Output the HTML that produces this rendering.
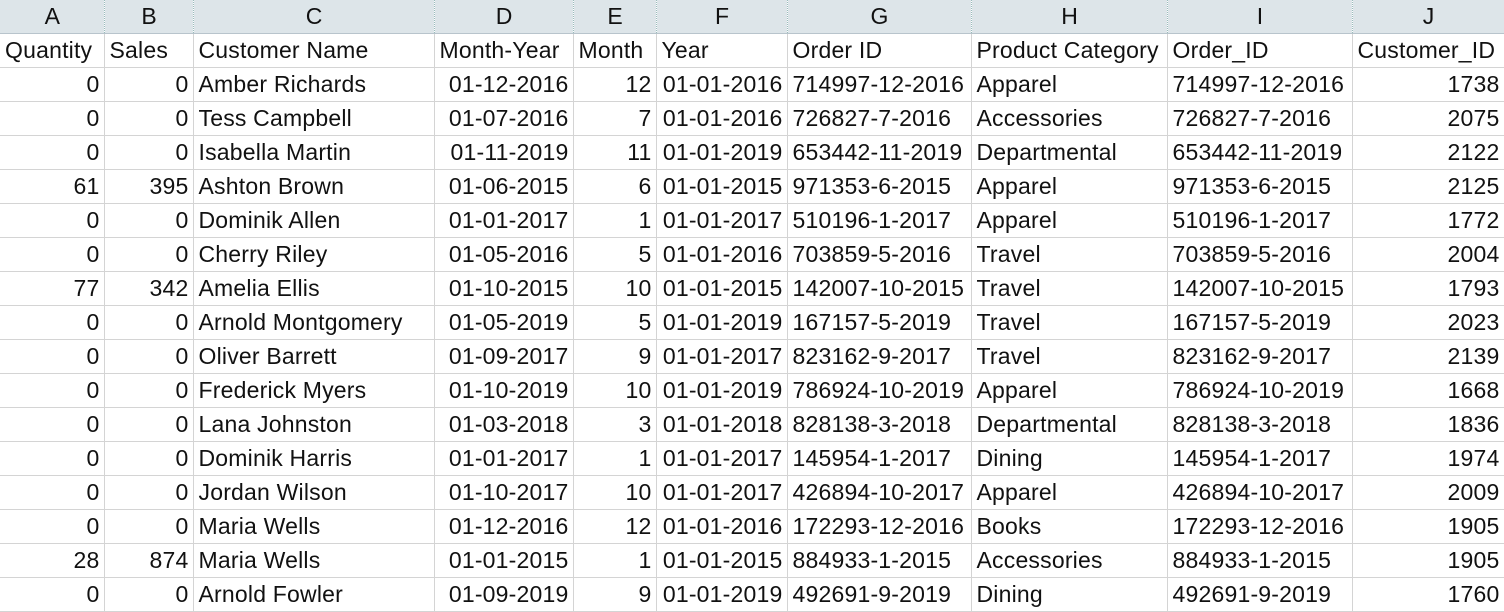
<!DOCTYPE html>
<html><head><meta charset="utf-8"><style>
body{margin:0;width:1504px;height:612px;overflow:hidden;background:#fff;font-family:"Liberation Sans",sans-serif;}
table{border-collapse:collapse;table-layout:fixed;width:1504px;}
td{height:34px;padding:0 4px 0 5px;border-right:1px solid #d4d4d4;border-bottom:1px solid #d4d4d4;font-size:23px;color:#111;white-space:nowrap;overflow:hidden;box-sizing:border-box;letter-spacing:0.2px;line-height:33px}
tr.h td{background:#dde5e9;text-align:center;height:33px;line-height:32px;border-right:1px dotted #9bb;border-bottom:1px solid #b8c4cc;letter-spacing:0}
td.r{text-align:right}
</style></head><body>
<table>
<colgroup><col style="width:104px"><col style="width:89px"><col style="width:241px"><col style="width:139px"><col style="width:83px"><col style="width:131px"><col style="width:184px"><col style="width:196px"><col style="width:185px"><col style="width:152px"></colgroup>
<tr class="h"><td>A</td><td>B</td><td>C</td><td>D</td><td>E</td><td>F</td><td>G</td><td>H</td><td>I</td><td>J</td></tr>
<tr><td>Quantity</td><td>Sales</td><td>Customer Name</td><td>Month-Year</td><td>Month</td><td>Year</td><td>Order ID</td><td>Product Category</td><td>Order_ID</td><td>Customer_ID</td></tr>
<tr><td class="r">0</td><td class="r">0</td><td>Amber Richards</td><td class="r">01-12-2016</td><td class="r">12</td><td class="r">01-01-2016</td><td>714997-12-2016</td><td>Apparel</td><td>714997-12-2016</td><td class="r">1738</td></tr>
<tr><td class="r">0</td><td class="r">0</td><td>Tess Campbell</td><td class="r">01-07-2016</td><td class="r">7</td><td class="r">01-01-2016</td><td>726827-7-2016</td><td>Accessories</td><td>726827-7-2016</td><td class="r">2075</td></tr>
<tr><td class="r">0</td><td class="r">0</td><td>Isabella Martin</td><td class="r">01-11-2019</td><td class="r">11</td><td class="r">01-01-2019</td><td>653442-11-2019</td><td>Departmental</td><td>653442-11-2019</td><td class="r">2122</td></tr>
<tr><td class="r">61</td><td class="r">395</td><td>Ashton Brown</td><td class="r">01-06-2015</td><td class="r">6</td><td class="r">01-01-2015</td><td>971353-6-2015</td><td>Apparel</td><td>971353-6-2015</td><td class="r">2125</td></tr>
<tr><td class="r">0</td><td class="r">0</td><td>Dominik Allen</td><td class="r">01-01-2017</td><td class="r">1</td><td class="r">01-01-2017</td><td>510196-1-2017</td><td>Apparel</td><td>510196-1-2017</td><td class="r">1772</td></tr>
<tr><td class="r">0</td><td class="r">0</td><td>Cherry Riley</td><td class="r">01-05-2016</td><td class="r">5</td><td class="r">01-01-2016</td><td>703859-5-2016</td><td>Travel</td><td>703859-5-2016</td><td class="r">2004</td></tr>
<tr><td class="r">77</td><td class="r">342</td><td>Amelia Ellis</td><td class="r">01-10-2015</td><td class="r">10</td><td class="r">01-01-2015</td><td>142007-10-2015</td><td>Travel</td><td>142007-10-2015</td><td class="r">1793</td></tr>
<tr><td class="r">0</td><td class="r">0</td><td>Arnold Montgomery</td><td class="r">01-05-2019</td><td class="r">5</td><td class="r">01-01-2019</td><td>167157-5-2019</td><td>Travel</td><td>167157-5-2019</td><td class="r">2023</td></tr>
<tr><td class="r">0</td><td class="r">0</td><td>Oliver Barrett</td><td class="r">01-09-2017</td><td class="r">9</td><td class="r">01-01-2017</td><td>823162-9-2017</td><td>Travel</td><td>823162-9-2017</td><td class="r">2139</td></tr>
<tr><td class="r">0</td><td class="r">0</td><td>Frederick Myers</td><td class="r">01-10-2019</td><td class="r">10</td><td class="r">01-01-2019</td><td>786924-10-2019</td><td>Apparel</td><td>786924-10-2019</td><td class="r">1668</td></tr>
<tr><td class="r">0</td><td class="r">0</td><td>Lana Johnston</td><td class="r">01-03-2018</td><td class="r">3</td><td class="r">01-01-2018</td><td>828138-3-2018</td><td>Departmental</td><td>828138-3-2018</td><td class="r">1836</td></tr>
<tr><td class="r">0</td><td class="r">0</td><td>Dominik Harris</td><td class="r">01-01-2017</td><td class="r">1</td><td class="r">01-01-2017</td><td>145954-1-2017</td><td>Dining</td><td>145954-1-2017</td><td class="r">1974</td></tr>
<tr><td class="r">0</td><td class="r">0</td><td>Jordan Wilson</td><td class="r">01-10-2017</td><td class="r">10</td><td class="r">01-01-2017</td><td>426894-10-2017</td><td>Apparel</td><td>426894-10-2017</td><td class="r">2009</td></tr>
<tr><td class="r">0</td><td class="r">0</td><td>Maria Wells</td><td class="r">01-12-2016</td><td class="r">12</td><td class="r">01-01-2016</td><td>172293-12-2016</td><td>Books</td><td>172293-12-2016</td><td class="r">1905</td></tr>
<tr><td class="r">28</td><td class="r">874</td><td>Maria Wells</td><td class="r">01-01-2015</td><td class="r">1</td><td class="r">01-01-2015</td><td>884933-1-2015</td><td>Accessories</td><td>884933-1-2015</td><td class="r">1905</td></tr>
<tr><td class="r">0</td><td class="r">0</td><td>Arnold Fowler</td><td class="r">01-09-2019</td><td class="r">9</td><td class="r">01-01-2019</td><td>492691-9-2019</td><td>Dining</td><td>492691-9-2019</td><td class="r">1760</td></tr>
</table>
</body></html>
